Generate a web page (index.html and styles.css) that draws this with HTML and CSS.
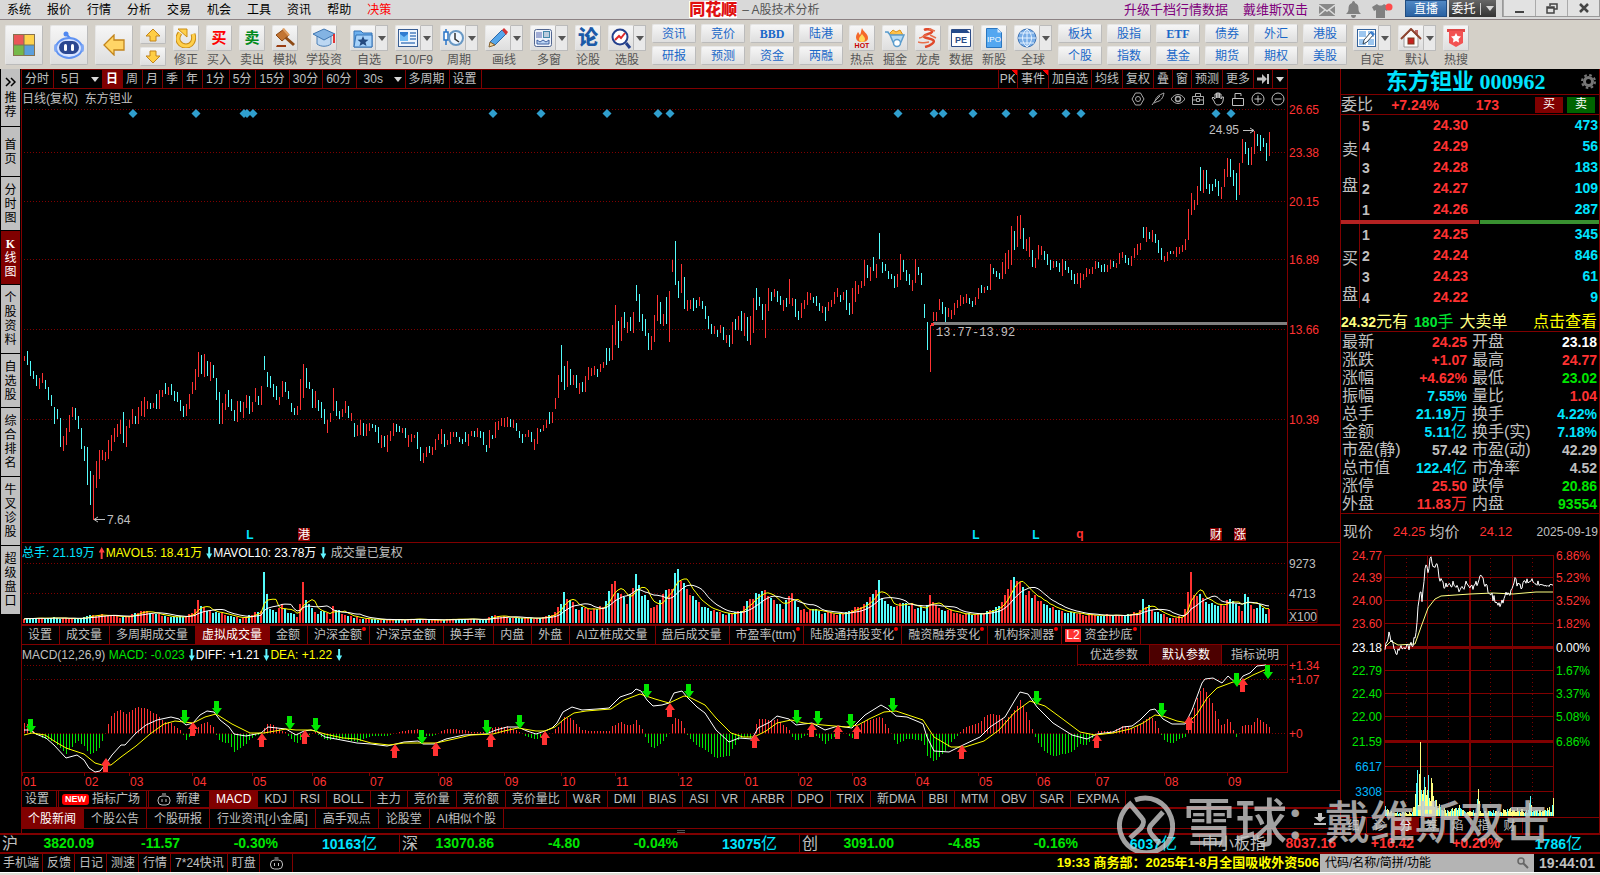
FILE: index.html
```html
<!DOCTYPE html>
<html lang="zh-CN">
<head>
<meta charset="utf-8">
<title>同花顺 - A股技术分析</title>
<link rel="stylesheet" href="styles.css">
</head>
<body>
<div class="app">
  <header class="titlebar">
    <nav class="menu">
      <button>系统</button><button>报价</button><button>行情</button><button>分析</button><button>交易</button><button>机会</button><button>工具</button><button>资讯</button><button>帮助</button><button class="hot">决策</button>
    </nav>
    <div class="brand"><b>同花顺</b><span>– A股技术分析</span></div>
    <div class="account">
      <a href="#">升级千档行情数据</a>
      <a href="#">戴维斯双击</a>
      <svg width="16" height="12" viewBox="0 0 16 12"><rect width="16" height="12" fill="#888"/><path d="M0 1l8 6 8-6M0 11l6-5M16 11l-6-5" fill="none" stroke="#ddd" stroke-width="1.5"/></svg>
      <svg width="15" height="17" viewBox="0 0 15 17"><path d="M7.500 0c1 0 1.500 1 1.500 2 3 1 3.500 3 3.500 6 0 2 .5 3 2.500 5H0c2-2 2.500-3 2.500-5 0-3 .5-5 3.500-6 0-1 .5-2 1.500-2zM5 14h5c0 2-1 3-2.500 3S5 16 5 14z" fill="#808080"/></svg>
      <svg width="21" height="16" viewBox="0 0 21 16"><path d="M5 2c2 2 5 2 7 0l5 3-2 4-2-1v8H4V8L2 9 0 5z" fill="#808080"/><circle cx="17" cy="5" r="3.500" fill="#ff4a4a"/></svg>
    </div>
    <button class="live">直播</button>
    <button class="trade"><span>委托</span><i class="caret light"></i></button>
    <div class="winctl">
      <button aria-label="最小化"><svg width="11" height="11"><path d="M1 9h9" stroke="#444" stroke-width="2"/></svg></button>
      <button aria-label="还原"><svg width="12" height="11"><path d="M4 3V1h7v5H8M1 4h7v6H1zM1 5h7" fill="none" stroke="#444" stroke-width="1.500"/></svg></button>
      <button aria-label="关闭"><svg width="10" height="10"><path d="M1 1l8 8M9 1L1 9" stroke="#444" stroke-width="2.500"/></svg></button>
    </div>
  </header>

  <div class="toolbar">
    <button class="big" aria-label="主页"><svg width="22" height="22"><rect width="11" height="11" fill="#ea5757"/><rect x="11" width="11" height="11" fill="#ffd34d"/><rect y="11" width="11" height="11" fill="#76b94a"/><rect x="11" y="11" width="11" height="11" fill="#5c9fdc"/><path d="M0 11h22M11 0v22" stroke="#775" /><rect x=".5" y=".5" width="21" height="21" fill="none" stroke="#87724f"/></svg></button>
    <button class="big" aria-label="助手"><svg width="30" height="28" viewBox="0 0 30 28"><circle cx="12" cy="3" r="2.500" fill="#5088f0"/><path d="M13 4l4 4" stroke="#5088f0" stroke-width="2"/><ellipse cx="15" cy="17" rx="13" ry="10" fill="#d8e4ff" stroke="#5f92f2" stroke-width="2"/><ellipse cx="1.500" cy="17" rx="1.500" ry="4" fill="#7fa8f5"/><ellipse cx="28.500" cy="17" rx="1.500" ry="4" fill="#7fa8f5"/><rect x="5" y="10" width="20" height="13" rx="6.500" fill="#2b4790"/><rect x="10" y="13" width="3" height="7" rx="1.500" fill="#fff"/><rect x="17" y="13" width="3" height="7" rx="1.500" fill="#fff"/></svg></button>
    <button class="big" aria-label="后退"><svg width="22" height="22"><path d="M1 11L11 1v5h10v10H11v5z" fill="#ffd566" stroke="#c2841c" stroke-width="1.300"/></svg></button>
    <div class="updown">
      <button aria-label="上一个"><svg width="16" height="14"><path d="M8 1l7 7h-4v5H5V8H1z" fill="#ffce45" stroke="#c2841c"/></svg></button>
      <button aria-label="下一个"><svg width="16" height="14"><path d="M8 13l7-7h-4V1H5v5H1z" fill="#ffce45" stroke="#c2841c"/></svg></button>
    </div>
    <button class="tool"><i><svg width="20" height="20" viewBox="0 0 20 20"><path d="M4 5c-5 7 0 13 6 13s9-6 7-12" fill="none" stroke="#c98d18" stroke-width="5"/><path d="M4 5c-5 7 0 13 6 13s9-6 7-12" fill="none" stroke="#ffd04b" stroke-width="3"/><path d="M2 1h9v8z" fill="#ffd04b" stroke="#c98d18"/></svg></i>修正</button>
    <button class="tool"><i class="buy">买</i>买入</button>
    <button class="tool"><i class="sell">卖</i>卖出</button>
    <button class="tool"><i><svg width="20" height="20" viewBox="0 0 20 20"><path d="M10 9l9 8" stroke="#8c4a16" stroke-width="3"/><path d="M1 7l8-6 5 6-7 6z" fill="#c27432" stroke="#8a4713"/><path d="M7 1l2-1 6 7-2 1z" fill="#e0a065"/><path d="M2 17h9v2H1z" fill="#9a3d12"/></svg></i>模拟</button>
    <button class="tool wide"><i><svg width="22" height="20" viewBox="0 0 22 20"><path d="M4 8v8c4 3 10 3 14 0V8z" fill="#bcd7f2" stroke="#4c80b6"/><path d="M0 6l11-5 11 5-11 6z" fill="#83b3e3" stroke="#3f76b0"/><path d="M21 6v9" stroke="#e23434" stroke-width="2"/></svg></i>学投资</button>
    <button class="tool split"><i><svg width="20" height="19" viewBox="0 0 20 19"><path d="M1 2h7l2 2h9v14H1z" fill="#6db0ee" stroke="#3573b5"/><path d="M3 6h16v12H1z" fill="#a6d2fa" stroke="#3573b5"/><path d="M10 7l1.500 3.500 4 .3-3 2.500 1 3.700-3.500-2-3.500 2 1-3.700-3-2.500 4-.3z" fill="#244a80"/></svg></i><em></em>自选</button>
    <button class="tool split"><i><svg width="20" height="18" viewBox="0 0 20 18"><rect x=".5" y=".5" width="19" height="17" fill="#eef5fd" stroke="#3a5f94"/><rect x="2" y="3" width="8" height="9" fill="#2f7cd0"/><path d="M2 5l4 3 4-3v7H2z" fill="#72bdf5"/><path d="M12 4h6M12 7h6M12 10h6M3 14h14" stroke="#4c80c0" stroke-width="1.500"/></svg></i><em></em>F10/F9</button>
    <button class="tool split"><i><svg width="21" height="20" viewBox="0 0 21 20"><path d="M3 1v16" stroke="#2874c8" stroke-width="1.500"/><rect x="1" y="4" width="4" height="8" fill="#fff" stroke="#2874c8" stroke-width="1.500"/><circle cx="13" cy="10" r="7" fill="#eef6ff" stroke="#6898c4" stroke-width="2"/><path d="M12 5v6l4 3" fill="none" stroke="#333" stroke-width="1.500"/></svg></i><em></em>周期</button>
    <button class="tool split"><i><svg width="20" height="20" viewBox="0 0 20 20"><path d="M2 14L14 2l4 4L7 17z" fill="#55a6ea" stroke="#2d68a8"/><path d="M14 2l2-2 4 4-2 3z" fill="#d33636"/><path d="M2 14l5 3-6 2z" fill="#f2d49a" stroke="#846230"/></svg></i><em></em>画线</button>
    <button class="tool split"><i><svg width="18" height="18" viewBox="0 0 18 18"><rect x=".5" y=".5" width="17" height="17" rx="2" fill="#eef2fa" stroke="#526690"/><path d="M2 4h6M2 6h6M2 8h6" stroke="#5366b0"/><rect x="9.500" y="2.500" width="6" height="6" fill="#bcd" stroke="#48a"/><path d="M3 15v-4l3 2 3-2 3 2 3-2v4z" fill="#bcd5f4" stroke="#4060a0"/></svg></i><em></em>多窗</button>
    <button class="tool"><i class="forum">论</i>论股</button>
    <button class="tool split"><i><svg width="21" height="21" viewBox="0 0 21 21"><circle cx="9" cy="9" r="7.500" fill="#fff" stroke="#24408c" stroke-width="2"/><path d="M15 15l4 5" stroke="#24408c" stroke-width="3"/><path d="M4 12l4-4 2 2 4-5" fill="none" stroke="#e02828" stroke-width="2"/></svg></i><em></em>选股</button>
    <div class="links four">
      <button>资讯</button><button>竞价</button><button class="lat">BBD</button><button>陆港</button>
      <button>研报</button><button>预测</button><button>资金</button><button>两融</button>
    </div>
    <button class="tool"><i><svg width="18" height="20" viewBox="0 0 18 20"><path d="M9 0c1 4 6 5 6 10 0 3-3 4-6 4s-6-1-6-5c0-2 1-3 2-5 1 1 1 2 2 3 1-2 1-4 2-7z" fill="#f4682a"/><path d="M9 6c1 2 3 3 3 5s-1 3-3 3-3-1-3-3 2-3 3-5z" fill="#ffd75a"/><text x="9" y="20" text-anchor="middle" font-size="7" font-weight="bold" fill="#c80000">HOT</text></svg></i>热点</button>
    <button class="tool"><i><svg width="20" height="20" viewBox="0 0 20 20"><path d="M4 6l4-4 3 2 4-2 3 5z" fill="#ffc34a" stroke="#d8901c"/><path d="M0 4h3l2 3h14l-3 7H8L5 7" fill="#b5daf5" stroke="#5c9dcd" stroke-width="1.500"/><circle cx="12" cy="15" r="3.500" fill="#fff" stroke="#5c9dcd" stroke-width="1.500"/></svg></i>掘金</button>
    <button class="tool"><i><svg width="20" height="20" viewBox="0 0 20 20"><path d="M6 2c4-2 9 0 8 2s-7 2-8 4 6 2 9 4-3 6-8 7" fill="none" stroke="#e0492c" stroke-width="2.500"/><path d="M1 10c4 0 4-3 8-3M0 14c4 2 8 0 11 0M12 7l6 3M11 1l6 2" fill="none" stroke="#e8704c" stroke-width="1.500"/></svg></i>龙虎</button>
    <button class="tool"><i><svg width="20" height="18" viewBox="0 0 20 18"><path d="M.5.500h19v17H.5z" fill="#fff" stroke="#2d4d88"/><path d="M1 1h15l3 3H1z" fill="#244a8a"/><text x="10" y="14" text-anchor="middle" font-size="9" font-weight="bold" fill="#2a4c86">PE</text></svg></i>数据</button>
    <button class="tool"><i><svg width="16" height="20" viewBox="0 0 16 20"><path d="M.5.500h11l4 4v15H.5z" fill="#54a7f0" stroke="#2a76c0"/><path d="M11.500.500v4h4z" fill="#d8ecff"/><text x="8" y="14" text-anchor="middle" font-size="8" fill="#fff">IPO</text></svg></i>新股</button>
    <button class="tool split"><i><svg width="20" height="20" viewBox="0 0 20 20"><circle cx="10" cy="10" r="9" fill="#77ace6" stroke="#3f74b4"/><path d="M1 10h18M3 5h14M3 15h14M10 1c-6 5-6 13 0 18M10 1c6 5 6 13 0 18M10 1v18" fill="none" stroke="#e4f1ff"/></svg></i><em></em>全球</button>
    <div class="links six">
      <button>板块</button><button>股指</button><button class="lat">ETF</button><button>债券</button><button>外汇</button><button>港股</button>
      <button>个股</button><button>指数</button><button>基金</button><button>期货</button><button>期权</button><button>美股</button>
    </div>
    <button class="tool split"><i><svg width="19" height="18" viewBox="0 0 19 18"><rect x=".5" y=".5" width="18" height="17" fill="#fff" stroke="#35649c"/><path d="M2 2h7v6H2zM11 2h6v6h-6zM2 10h7v6H2zM11 10h6v6h-6z" fill="#9cc6ef"/><path d="M6 15l1-4 7-8 3 2-7 8z" fill="#fff" stroke="#345"/><path d="M13 4l1-2 4 3-2 2z" fill="#3b7fd0"/></svg></i><em></em>自定</button>
    <button class="tool split"><i><svg width="22" height="20" viewBox="0 0 22 20"><path d="M15 2h3v6h-3z" fill="#b66"/><path d="M4 9v10h14V9l-7-7z" fill="#fafafa" stroke="#999"/><path d="M1 11L11 1l10 10" fill="none" stroke="#8e4430" stroke-width="2"/><rect x="8" y="10" width="6" height="6" fill="#c62020" stroke="#7c3a1c"/></svg></i><em></em>默认</button>
    <button class="tool"><i><svg width="18" height="18" viewBox="0 0 18 18"><path d="M0 0h18v3H0z" fill="#e04848"/><path d="M2 2h14v12l-7 4-7-4z" fill="#f25252"/><path d="M9 4l1.500 3 3.500.500-2.500 2.500.5 3.500L9 12l-3 1.500.5-3.500L4 7.500 7.500 7z" fill="#fff"/></svg></i>热搜</button>
  </div>

  <div class="workspace">
    <nav class="side">
      <button class="first"><svg width="11" height="10"><path d="M1 1l4 4-4 4M6 1l4 4-4 4" fill="none" stroke="#000" stroke-width="1.500"/></svg>推荐</button>
      <button class="n49">首页</button>
      <button class="n53">分时图</button>
      <button class="n53 on"><b>K</b>线图</button>
      <button class="n68">个股资料</button>
      <button class="n53">自选股</button>
      <button class="n68">综合排名</button>
      <button class="n68">牛叉诊股</button>
      <button class="n68">超级盘口</button>
    </nav>

    <main class="center">
      <div class="periods">
        <button>分时</button><button class="drop">5日<i class="caret light"></i></button><button class="on">日</button><button>周</button><button>月</button><button>季</button><button>年</button><button>1分</button><button>5分</button><button>15分</button><button>30分</button><button>60分</button><button class="drop">30s<i class="caret light"></i></button><button>多周期</button><button>设置</button>
        <span class="spring"></span>
        <div class="extras"><button class="flag pk">PK</button><button class="flag">事件</button><button>加自选</button><button>均线</button><button>复权</button><button>叠</button><button>窗</button><button>预测</button><button>更多</button><button aria-label="跳到最后"><svg width="12" height="10"><path d="M0 5h6" stroke="#c0c0c0" stroke-width="3"/><path d="M5 0l5 5-5 5z" fill="#c0c0c0"/><path d="M11 0v10" stroke="#c0c0c0" stroke-width="2"/></svg></button><button class="last" aria-label="展开"><i class="caret light"></i></button></div>
      </div>
      <div class="plothead">
        <span>日线(复权)&nbsp; 东方钽业</span>
        <div class="drawtools">
          <button aria-label="设置"><svg width="14" height="14"><path d="M4.500 1h5L13 7l-3.500 6h-5L1 7z" fill="none" stroke="#aaa"/><circle cx="7" cy="7" r="2.500" fill="none" stroke="#aaa"/></svg></button>
          <button aria-label="画笔"><svg width="14" height="14"><path d="M1 13l3-4c1-4 4-6 9-8-1 5-3 8-8 9l-2 1M4 9l5-5" fill="none" stroke="#aaa"/></svg></button>
          <button aria-label="显示"><svg width="14" height="14"><path d="M0 7c4-6 10-6 14 0-4 6-10 6-14 0z" fill="none" stroke="#aaa"/><circle cx="7" cy="7" r="2.500" fill="none" stroke="#aaa" stroke-width="1.500"/></svg></button>
          <button aria-label="工具箱"><svg width="14" height="14"><path d="M1.500 4.500h11v8h-11zM4.500 4V1.500h5V4M1 8h4M9 8h4M5.500 6.500h3v3h-3z" fill="none" stroke="#aaa"/></svg></button>
          <button aria-label="拖动"><svg width="14" height="14"><path d="M3 9L1 6l1-1 2 2V2h1.500v4V1H7v5V1h1.500v5V2H10v5l1-2h1.500L12 9c-1 3-2 4-5 4-2 0-3-1-4-4z" fill="none" stroke="#c0c0c0"/></svg></button>
          <button aria-label="锁定"><svg width="14" height="14"><path d="M1.500 6.500h11v7h-11zM4 6V1.500h6V4" fill="none" stroke="#c0c0c0"/></svg></button>
          <button aria-label="放大"><svg width="14" height="14"><circle cx="7" cy="7" r="6" fill="none" stroke="#c0c0c0"/><path d="M3.500 7h7M7 3.500v7" stroke="#c0c0c0"/></svg></button>
          <button aria-label="缩小"><svg width="14" height="14"><circle cx="7" cy="7" r="6" fill="none" stroke="#c0c0c0"/><path d="M3.500 7h7" stroke="#c0c0c0"/></svg></button>
        </div>
      </div>
      <svg id="kline" class="plot grow" viewBox="22 109 1318 433" preserveAspectRatio="none"></svg>
      <div class="rule"></div>
      <div class="plothead">
        <span class="cy">总手: 21.19万</span><span class="arr up"></span><span class="ye">MAVOL5: 18.41万</span><span class="arr dn"></span><span class="wh">MAVOL10: 23.78万</span><span class="arr dn"></span><span>&nbsp;成交量已复权</span>
      </div>
      <svg id="volume" class="plot vol" viewBox="22 563 1318 61" preserveAspectRatio="none"></svg>
      <div class="tabs">
        <button>设置</button><button>成交量</button><button>多周期成交量</button><button class="on">虚拟成交量</button><button>金额</button><button class="dot">沪深金额</button><button>沪深京金额</button><button>换手率</button><button>内盘</button><button>外盘</button><button>AI立桩成交量</button><button>盘后成交量</button><button class="dot">市盈率(ttm)</button><button class="dot">陆股通持股变化</button><button class="dot">融资融券变化</button><button class="dot">机构探测器</button><button class="dot l2"><u>L2</u>资金抄底</button>
      </div>
      <div class="plothead">
        <span>MACD(12,26,9)&nbsp;</span><span class="gr">MACD: -0.023</span><span class="arr dn"></span><span class="wh">DIFF: +1.21</span><span class="arr dn"></span><span class="ye">DEA: +1.22</span><span class="arr dn"></span>
        <div class="params"><button>优选参数</button><button class="on">默认参数</button><button>指标说明</button></div>
      </div>
      <svg id="macd" class="plot mac" viewBox="22 665 1318 125" preserveAspectRatio="none"></svg>
      <div class="tabs thin">
        <button>设置</button><button class="square"><mark>NEW</mark>指标广场</button><button class="create"><svg width="14" height="13" viewBox="0 0 14 13"><rect x="1" y="3" width="12" height="9" rx="4" fill="none" stroke="#c0c0c0"/><path d="M5 1h4M5 6v3M9 6v3" stroke="#c0c0c0"/></svg>新建</button><button class="on">MACD</button><button>KDJ</button><button>RSI</button><button>BOLL</button><button>主力</button><button>竞价量</button><button>竞价额</button><button>竞价量比</button><button>W&amp;R</button><button>DMI</button><button>BIAS</button><button>ASI</button><button>VR</button><button>ARBR</button><button>DPO</button><button>TRIX</button><button>新DMA</button><button>BBI</button><button>MTM</button><button>OBV</button><button>SAR</button><button>EXPMA</button>
      </div>
      <div class="tabs news">
        <button class="on">个股新闻</button><button>个股公告</button><button>个股研报</button><button>行业资讯[小金属]</button><button>高手观点</button><button>论股堂</button><button>AI相似个股</button>
        <span class="spring"></span>
        <svg class="collapse" width="12" height="12"><path d="M4 0h4v4h4L6 9 0 4h4zM0 10h12v2H0z" fill="#c0c0c0"/></svg>
      </div>
      <div class="grip"><i></i></div>
    </main>

    <aside class="quote">
      <h1><span>东方钽业 000962</span><svg width="15" height="15" viewBox="0 0 15 15"><circle cx="7.500" cy="7.500" r="4" fill="none" stroke="#777" stroke-width="3"/><circle cx="7.500" cy="7.500" r="6.500" fill="none" stroke="#777" stroke-width="2" stroke-dasharray="2.600 2.500"/></svg></h1>
      <div class="ratio"><span class="cn">委比</span><b>+7.24%</b><b>173</b><button class="b">买</button><button class="s">卖</button></div>
      <div class="book">
        <div class="levels"><div class="cap"><span>卖</span><span>盘</span></div>
          <table><tr><th>5</th><td>24.30</td><td>473</td></tr><tr><th>4</th><td>24.29</td><td>56</td></tr><tr><th>3</th><td>24.28</td><td>183</td></tr><tr><th>2</th><td>24.27</td><td>109</td></tr><tr><th>1</th><td>24.26</td><td>287</td></tr></table></div>
        <div class="power"><i></i><i></i></div>
        <div class="levels"><div class="cap"><span>买</span><span>盘</span></div>
          <table><tr><th>1</th><td>24.25</td><td>345</td></tr><tr><th>2</th><td>24.24</td><td>846</td></tr><tr><th>3</th><td>24.23</td><td>61</td></tr><tr><th>4</th><td>24.22</td><td>9</td></tr></table></div>
      </div>
      <div class="alert"><span><b>24.32</b>元有</span><span class="lots"><b>180</b>手</span><span>大卖单</span><a href="#">点击查看</a></div>
      <dl class="stats">
        <div><dt>最新</dt><dd class="re">24.25</dd></div><div><dt>开盘</dt><dd class="wh">23.18</dd></div>
        <div><dt>涨跌</dt><dd class="re">+1.07</dd></div><div><dt>最高</dt><dd class="re">24.77</dd></div>
        <div><dt>涨幅</dt><dd class="re">+4.62%</dd></div><div><dt>最低</dt><dd class="gr">23.02</dd></div>
        <div><dt>振幅</dt><dd class="cy">7.55%</dd></div><div><dt>量比</dt><dd class="re">1.04</dd></div>
        <div><dt>总手</dt><dd class="cy">21.19<s>万</s></dd></div><div><dt>换手</dt><dd class="cy">4.22%</dd></div>
        <div><dt>金额</dt><dd class="cy">5.11<s>亿</s></dd></div><div><dt>换手(实)</dt><dd class="cy">7.18%</dd></div>
        <div><dt>市盈(静)</dt><dd>57.42</dd></div><div><dt>市盈(动)</dt><dd>42.29</dd></div>
        <div><dt>总市值</dt><dd class="cy">122.4<s>亿</s></dd></div><div><dt>市净率</dt><dd>4.52</dd></div>
        <div><dt>涨停</dt><dd class="re">25.50</dd></div><div><dt>跌停</dt><dd class="gr">20.86</dd></div>
        <div><dt>外盘</dt><dd class="re">11.83<s>万</s></dd></div><div><dt>内盘</dt><dd class="gr">93554</dd></div>
      </dl>
      <div class="now"><span class="lab">现价</span><span class="re">24.25</span><span class="lab">均价</span><span class="re">24.12</span><time>2025-09-19</time></div>
      <svg id="intraday" class="plot grow" viewBox="1341 554 258 263" preserveAspectRatio="none"></svg>
      <div class="mini"><button>细</button><button>诊</button><button class="on">分</button><button>筹</button><button>焰</button><button>指</button><button>财</button></div>
    </aside>
  </div>

  <div class="indices">
    <div><span>沪</span><b>3820.09</b><b>-11.57</b><b>-0.30%</b><b class="cy">10163<s>亿</s></b></div>
    <div><span>深</span><b>13070.86</b><b>-4.80</b><b>-0.04%</b><b class="cy">13075<s>亿</s></b></div>
    <div><span>创</span><b>3091.00</b><b>-4.85</b><b>-0.16%</b><b class="cy">6037<s>亿</s></b></div>
    <div class="sme"><span>中小板指</span><b>8037.16</b><b>+16.42</b><b>+0.20%</b><b class="cy">1786<s>亿</s></b></div>
  </div>
  <footer class="status">
    <button>手机端</button><button>反馈</button><button>日记</button><button>测速</button><button>行情</button><button>7*24快讯</button><button>盯盘</button><button class="bot" aria-label="助手"><svg width="15" height="13" viewBox="0 0 14 13"><rect x="1" y="3" width="12" height="9" rx="4" fill="none" stroke="#c0c0c0"/><path d="M5 1h4M5 6v3M9 6v3" stroke="#c0c0c0"/></svg></button>
    <span class="spring"></span>
    <a href="#" class="ticker">19:33 商务部：2025年1-8月全国吸收外资506</a>
    <label class="find"><input type="text" placeholder="代码/名称/简拼/功能" aria-label="代码/名称/简拼/功能"><svg width="12" height="12"><circle cx="4" cy="4" r="3" fill="none" stroke="#666" stroke-width="1.500"/><path d="M6 6l5 5" stroke="#666" stroke-width="2"/></svg></label>
    <time>19:44:01</time>
  </footer>
  <div class="strip"></div>
  <div class="watermark"><svg width="58" height="58" viewBox="0 0 58 58"><g fill="none" stroke="#c8c8c8" stroke-width="5"><path d="M18 5c15-6 31 2 36 17s-2 29-15 34-28-1-34-14S4 17 13 9l11 13c4 4 3 7 0 11L13 43"/><path d="M46 17L35 29c-4 4-3 8 0 11l8 9"/></g></svg><span>雪球</span><span class="colon">：</span><span>戴维斯双击</span></div>
</div>
<script src="charts.js"></script>
</body>
</html>
```

FILE: styles.css
```css
* { box-sizing: border-box; }
body { margin: 0; background: #000; color: #c0c0c0; font: 12px/16px "Liberation Sans", "Noto Sans CJK SC", sans-serif; }
button { font: inherit; color: inherit; background: none; border: 0; margin: 0; padding: 0; white-space: nowrap; cursor: pointer; }
a { color: inherit; text-decoration: none; }
svg { display: block; flex: none; }
i, em { font-style: normal; }
s { text-decoration: none; font-weight: 400; font-size: 16px; }
.app { position: relative; display: flex; flex-direction: column; min-height: 100vh; overflow: hidden; }
.spring { flex: 1; }
.caret { display: inline-block; border: 4px solid transparent; border-top: 5px solid #444; border-bottom: 0; }
.caret.light { border-top-color: #d8d8d8; }
.cy { color: #00e4ff; } .ye { color: #ff0; } .wh { color: #fff; } .gr { color: #00e600; } .re { color: #ff3232; }

.titlebar { display: flex; align-items: center; height: 20px; background: #d9d9d9; border-bottom: 1px solid #8c8284; color: #000; }
.menu { display: flex; gap: 16px; padding-left: 7px; flex: 69 1 0; }
.menu .hot { color: #f00; }
.brand { display: flex; align-items: center; gap: 5px; color: #555; }
.brand b { color: #e01010; font-size: 16px; line-height: 17px; font-weight: 900; background: #fff; }
.account { flex: 58 1 0; display: flex; align-items: center; justify-content: flex-end; gap: 11px; padding-right: 12px; color: #80007c; }
.account a { font-size: 13px; }
.account a:first-child { margin-right: 4px; }
.live, .trade { align-self: flex-start; height: 17px; color: #fff; }
.live { width: 42px; background: linear-gradient(#5088c4, #2a62a2); border: 1px solid #204c80; margin-right: 2px; }
.trade { width: 47px; background: linear-gradient(#666, #333); display: flex; align-items: center; justify-content: center; gap: 5px; }
.trade span { padding-right: 4px; border-right: 1px solid #ccc; line-height: 12px; }
.winctl { display: flex; align-self: flex-start; margin-left: 6px; height: 17px; border: 1px solid #999; border-top: 0; }
.winctl button { width: 32px; display: grid; place-items: center; border-left: 1px solid #aaa; background: #e2e2e2; }

.toolbar { display: flex; align-items: flex-start; gap: 7px; height: 49px; padding: 5px 5px 0; background: #d4d0c8; color: #555; }
.toolbar button i, .big, .updown button, .links button { background: linear-gradient(#f6f6f6, #dedede); border: 1px solid #c4c2be; border-color: #e6e6e6 #bbb #bbb #e6e6e6; border-radius: 2px; }
.big { width: 38px; height: 40px; display: grid; place-items: center; }
.updown { display: flex; flex-direction: column; gap: 3px; }
.updown button { width: 26px; height: 19px; display: grid; place-items: center; }
.tool { width: 26px; display: flex; flex-wrap: wrap; justify-content: center; line-height: 18px; }
.tool i { width: 26px; height: 26px; display: grid; place-items: center; }
.tool.wide, .tool.split { width: 38px; }
.tool.split em { width: 12px; height: 26px; background: #e9e9e9; border: 1px solid #bbb; border-left: 0; display: grid; place-items: center; }
.tool.split em::after { content: ""; border: 4px solid transparent; border-top: 5px solid #555; border-bottom: 0; }
.tool .buy { color: #f00; font-weight: 700; font-size: 15px; }
.tool .sell { color: #008a1c; font-weight: 700; font-size: 15px; }
.tool .forum { color: #1b5aa8; font-weight: 900; font-size: 20px; }
.links { display: grid; gap: 3px 5px; margin: -1px -1px 0; color: #1a68c8; }
.links button { width: 44px; height: 19px; line-height: 16px; }
.links .lat { font-family: "Liberation Serif", serif; font-weight: 700; }
.links.four { grid-template-columns: repeat(4, 44px); }
.links.six { grid-template-columns: repeat(6, 44px); }

.workspace { flex: 1; display: flex; min-height: 764px; }
.side { width: 21px; flex: none; padding: 0 1px; display: flex; flex-direction: column; gap: 1px; color: #000; }
.side button { width: 19px; padding: 0 3px; background: #c0c0c0; white-space: normal; line-height: 14px; word-break: break-all; display: flex; flex-direction: column; align-items: center; justify-content: center; }
.side .first { height: 57px; gap: 4px; }
.side .n49 { height: 49px; } .side .n53 { height: 53px; } .side .n68 { height: 68px; }
.side .on { background: #800000; color: #fff; }
.side b { font-family: "Liberation Serif", serif; }

.center { flex: 1; min-width: 0; display: flex; flex-direction: column; border-left: 1px solid #800000; }
.periods { display: flex; height: 20px; margin-right: 52px; border: solid #800000; border-width: 1px 1px 1px 0; }
.extras { display: flex; border-left: 1px solid #800000; }
.periods button { padding: 0 4px 0 3px; border-right: 1px solid #800000; line-height: 17px; display: flex; align-items: center; }
.periods .extras button { padding: 0 3px; }
.periods .extras .pk { padding: 0 1px; }
.periods .on { background: #800000; color: #fff; font-weight: 700; }
.periods .drop { width: 49px; padding: 0 3px 0 7px; justify-content: space-between; }
.periods .flag { background: linear-gradient(225deg, #f00 4px, transparent 4px); }
.periods .last { border-right: 0; }
.plothead { display: flex; align-items: center; height: 20px; margin-right: 52px; border-right: 1px solid #800000; white-space: nowrap; }
.drawtools { margin-left: auto; display: flex; gap: 6px; padding-right: 2px; }
.plot { width: 100%; height: 0; overflow: visible; }
.grow { flex: 1 0 0; min-height: 200px; }
.vol { height: 61px; } .mac { height: 125px; }
.rule { height: 1px; background: #800000; }
.arr { width: 6px; height: 12px; margin: 0 1px 0 4px; background: #60f4ff; clip-path: polygon(33% 0, 66% 0, 66% 55%, 100% 55%, 50% 100%, 0 55%, 33% 55%); }
.arr.up { background: #ff4040; clip-path: polygon(33% 100%, 66% 100%, 66% 45%, 100% 45%, 50% 0, 0 45%, 33% 45%); }
.tabs { display: flex; height: 21px; border-top: 2px solid #800000; border-bottom: 1px solid #800000; }
.tabs button { padding: 0 7px 0 6px; border-right: 1px solid #800000; line-height: 17px; position: relative; }
.tabs .on { background: #800000; color: #fff; }
.tabs .dot::after { content: ""; position: absolute; right: 3px; top: 1px; width: 4px; height: 4px; border-radius: 2px; background: #f00; }
.tabs .l2 { padding-left: 3px; }
.tabs u { display: inline-block; text-decoration: none; background: #ff3232; color: #fff; line-height: 13px; padding: 0 1px; margin-right: 4px; }
.tabs.thin { height: 19px; border-top-width: 1px; border-bottom-width: 2px; }
.tabs.thin button { line-height: 16px; padding: 0 6px; }
.tabs.thin button:first-child { padding: 0 7px 0 3px; }
.tabs.thin .square { border-left: 1px solid #800000; margin-left: 1px; padding: 0 6px 0 3px; }
.tabs mark { display: inline-block; background: #f00; color: #fff; border-radius: 3px; font-size: 9px; line-height: 11px; font-weight: 700; padding: 0 3px; margin-right: 3px; vertical-align: 1px; }
.tabs.thin .create { display: flex; align-items: center; gap: 5px; padding: 0 9px 0 8px; border-left: 1px solid #800000; margin-left: 1px; }
.tabs.news { height: 20px; border-top: 0; }
.tabs.news button { line-height: 18px; padding: 0 7px; }
.tabs.news button:first-child { padding: 0 7px 0 6px; }
.collapse { margin: 4px 14px 0 0; }
.grip { height: 4px; }
.grip i { display: block; width: 8px; height: 3px; margin: 1px auto 0; border: solid #555; border-width: 1px 0; }
.params { margin-left: auto; display: flex; align-self: stretch; border-left: 1px solid #800000; border-bottom: 1px solid #800000; }
.params button { padding: 0 7px 0 8px; border-right: 1px solid #800000; width: 72px; line-height: 18px; }
.params .on { background: #4c0000; color: #fff; }
.params button:last-child { border: 0; width: 65px; }

.quote { width: 260px; flex: none; display: flex; flex-direction: column; border-left: 1px solid #800000; border-right: 1px solid #800000; }
.quote h1 { display: flex; align-items: center; margin: 0; height: 25px; color: #00e4ff; font: 700 22px/24px "Liberation Serif", "Noto Sans CJK SC", serif; padding: 0 3px 0 45px; justify-content: space-between; }
.ratio { display: grid; grid-template-columns: 38px 56px 56px 1fr 28px 28px; gap: 4px; align-items: center; height: 20px; border-top: 1px solid #800000; padding-right: 4px; color: #ff3232; font-size: 14px; }
.ratio b { text-align: right; }
.ratio .cn { font-size: 16px; color: #c0c0c0; }
.ratio button { height: 16px; color: #fff; line-height: 15px; font-size: 12px; }
.ratio .b { background: #800000; grid-column: 5; } .ratio .s { background: #006400; }
.book { height: 199px; border-top: 1px solid #800000; font-size: 14px; font-weight: 700; }
.levels { display: flex; }
.cap { width: 19px; padding: 27px 0 0 1px; display: flex; flex-direction: column; gap: 20px; border-right: 1px solid #800000; font-size: 16px; font-weight: 400; }
.levels table { flex: 1; border-collapse: collapse; }
.levels tr { height: 21px; }
.levels th { width: 10px; padding: 0 0 0 2px; text-align: left; }
.levels td { padding: 0 1px 0 0; text-align: right; width: 99px; color: #ff3232; line-height: 21px; }
.levels td:last-child { color: #00e4ff; width: auto; }
.power { display: flex; gap: 1px; height: 4px; }
.power i { flex: 138; background: #b42222; } .power i + i { flex: 119; background: #389030; }
.alert { display: flex; gap: 6px; height: 18px; align-items: center; color: #ffff80; font-size: 16px; white-space: nowrap; }
.alert b { font-size: 14px; } .alert .lots { color: #00e632; } .alert a { margin-left: auto; color: #ff0; padding-right: 2px; }
.stats { margin: 0; height: 182px; border-top: 1px solid #800000; padding: 1px 2px 0 1px; display: grid; grid-template-columns: 125px 1fr; column-gap: 5px; grid-auto-rows: 18px; }
.stats div { display: flex; justify-content: space-between; align-items: center; line-height: 18px; white-space: nowrap; }
.stats dt { font-size: 16px; } .stats dd { margin: 0; font-weight: 700; font-size: 14px; }
.now { display: flex; align-items: center; height: 41px; padding: 0 1px 4px 2px; border-top: 1px solid #800000; white-space: nowrap; }
.now .lab { font-size: 15px; } .now .re { margin: 0 4px 0 20px; font-size: 13px; } .now time { margin-left: auto; }
.mini { display: flex; height: 16px; border-top: 1px solid #800000; }
.mini button { width: 26px; border-right: 1px solid #800000; line-height: 14px; }
.mini .on { background: #800000; color: #fff; }

.indices { display: grid; grid-template-columns: repeat(4, 1fr); height: 21px; border: solid #800000; border-width: 2px 0; font-size: 14px; line-height: 17px; color: #00e600; }
.indices div { display: grid; grid-template-columns: 20px 72px 86px 98px 99px 1fr; border-right: 1px solid #800000; padding-left: 2px; text-align: right; }
.indices span { color: #c0c0c0; font-size: 16px; text-align: left; white-space: nowrap; }
.indices .sme { grid-template-columns: 64px 70px 78px 86px 82px; color: #ff3232; border: 0; }
.status { display: flex; height: 18px; }
.status button { padding: 0 3px 0 4px; border-right: 1px solid #800000; line-height: 17px; }
.status button:first-child { padding-left: 3px; }
.status .bot { width: 33px; padding-left: 9px; }
.ticker { color: #ff0; font-size: 13px; font-weight: 700; line-height: 17px; white-space: nowrap; }
.find { display: flex; align-items: center; width: 214px; background: #b4b4b4; padding: 0 5px; margin-left: 1px; }
.find input { flex: 1; min-width: 0; font: inherit; border: 0; padding: 0; background: none; outline: 0; }
.find input::placeholder { color: #000; opacity: 1; }
.status time { width: 66px; text-align: center; font-weight: 700; font-size: 14px; line-height: 18px; }
.strip { height: 3px; background: #e0dcd4; border-top: 1px solid #fff; }

.watermark { position: absolute; right: 50px; bottom: 22px; display: flex; align-items: center; gap: 6px; color: #c8c8c8; opacity: .8; font-size: 45px; line-height: 58px; font-weight: 500; pointer-events: none; }
.watermark svg + span { font-size: 52px; margin-left: 2px; }
.watermark .colon { margin: 0 -10px 0 -9px; }
```

FILE: charts.js
```javascript
const RED = '#ff3232', CYAN = '#54fcfc', GREEN = '#00e600', LINE = '#800000';
const rect = (x, y, w, h, f) => `<rect x="${x}" y="${y}" width="${w}" height="${h}" fill="${f}"/>`;
const text = (x, y, s, f, extra = '') => `<text x="${x}" y="${y}" fill="${f}" font-size="12" ${extra}>${s}</text>`;
const dots = (x1, x2, y) => `<path d="M${x1} ${y + 0.5}H${x2}" stroke="${LINE}" stroke-dasharray="1 2"/>`;
const poly = (pts, c, w = 1) => `<polyline points="${pts.map(p => p.join()).join(' ')}" fill="none" stroke="${c}" stroke-width="${w}"/>`;
const put = (id, s) => { document.getElementById(id).innerHTML = s; };
const noise = i => { const v = Math.sin(i * 12.9898) * 43758.5453; return v - Math.floor(v); };
const at = (pts, x) => {
  for (let k = 1; k < pts.length; k++) {
    if (x <= pts[k][0]) {
      const [a, b] = pts[k - 1], [c, d] = pts[k];
      return b + (d - b) * (x - a) / (c - a);
    }
  }
  return pts[pts.length - 1][1];
};

/* One entry per trading day: direction, high and low position on the price scale. */
const bars = `r356-361 c351-365 c361-376 c371-379 c375-386 r378-389 r373-383 c380-389 c387-400 c395-406 c407-424 c409-419 c418-447 r436-451 r428-445 r415-432 r407-417 c408-420 c416-429 c428-449
c446-461 c447-485 c471-505 r475-520 r461-488 r450-479 r450-460 r452-461 r440-459 r435-451 r428-442 r424-437 r420-434 c412-443 r426-447 r420-428 r409-424 c416-424 r407-424 r401-416
r397-417 r401-409 c403-409 r403-408 c394-409 r390-409 r390-397 c383-394 r387-395 c384-395 c391-401 c392-402 c400-411 c406-417 r404-416 r394-409 r382-394 r369-390 r352-377 c355-374
r354-377 c361-376 r362-381 c365-378 c378-400 c392-424 r403-424 r394-410 c390-407 c399-411 c410-421 r401-422 c401-412 r402-418 r395-408 c396-414 r402-412 r388-402 c396-405 r386-405
c356-370 c372-387 c376-388 c384-397 c386-400 r397-405 r381-397 c382-392 c391-399 c403-412 c408-415 r406-415 r379-410 r364-398 c368-388 c382-389 c389-408 r391-408 c400-411 c402-418
c409-424 r420-433 r413-422 r388-411 c401-416 c411-419 r409-417 r401-413 c406-418 r413-421 c423-437 r425-436 r420-435 c423-436 r424-436 r423-431 c424-428 c425-432 c427-443 r435-448
c436-447 r435-452 r431-441 r423-436 c424-432 c426-432 r428-433 c428-438 r435-447 r434-442 r435-438 c432-449 c447-461 r453-463 r447-457 c446-453 r447-455 r439-450 r434-440 r429-444
c434-447 r440-445 r432-444 r432-437 c432-437 c437-442 c439-444 c432-442 r434-446 r431-436 c431-437 r428-437 c431-438 c432-445 c445-452 r430-448 c435-439 r422-438 r421-430 r418-426
r418-427 r417-427 c419-427 r420-428 c423-431 c431-438 c434-443 r434-437 r430-437 c432-442 r439-450 r428-444 c429-432 r425-431 r420-428 c412-424 r412-423 r398-409 r375-398 c345-382
c366-390 r361-387 c369-385 r375-385 c375-388 r383-394 c382-392 r376-392 r367-380 r368-376 r366-375 c369-377 r364-372 r362-368 c348-365 c348-361 r325-360 r305-345 c321-348 r317-341
c312-328 r322-333 c317-331 r312-333 c285-301 c294-322 c314-331 c319-336 c333-350 r336-350 r315-342 r295-321 c302-324 r314-326 c297-324 r291-342 r260-272 c241-285 c281-298 r264-293
c277-309 r300-311 r300-309 c298-311 c300-308 r297-306 c301-309 c306-319 c316-329 c324-334 r326-334 c330-337 r325-333 c327-340 r335-343 c335-347 r322-344 c319-330 r316-330 c311-331
r313-336 c317-341 r316-345 r298-333 c288-310 c297-306 c304-320 r304-338 r288-311 c292-301 r289-297 c291-302 c296-305 r300-311 c298-307 r279-304 r298-306 c299-317 c311-320 r303-318
r300-309 r292-305 r293-300 c297-303 c296-306 c303-311 r306-313 c307-321 r302-311 r300-307 r292-304 r288-297 c295-302 r292-300 c290-310 c303-315 r288-314 r281-302 r285-294 r281-288
r260-286 c265-278 r267-281 c257-271 r264-278 c233-259 c262-273 c264-271 c271-279 c274-279 c276-288 r274-287 r254-280 c260-272 c270-281 c274-285 r280-291 r259-283 c267-275 c273-285
c304-318 c322-350 r325-372 r312-321 r312-321 r299-310 c302-314 c307-322 r308-317 r310-319 r303-315 r300-308 r295-306 r297-304 r294-303 c298-304 c301-307 r297-305 r288-299 c285-293
r287-293 c286-290 r264-290 c268-274 c271-277 c273-279 r262-279 r253-274 r250-269 r226-265 c231-250 r216-247 r215-239 c228-249 r239-251 r237-257 c250-267 r258-268 r245-259 r246-255
c251-260 c254-265 c260-270 r261-268 c261-267 c263-272 r259-276 c261-270 c267-273 c270-280 c274-284 r273-284 r273-288 r274-280 r268-277 r269-274 r267-274 r261-269 c262-268 c265-272
c264-272 r265-272 r260-269 c261-267 r263-268 r253-264 r252-258 c255-263 c258-265 r256-266 r248-258 r244-255 r243-250 c227-238 r227-242 c232-239 r230-242 c234-243 c240-253 c248-260
r256-262 r252-261 c251-254 r251-254 r247-257 r247-254 r245-252 r239-250 r209-240 r193-215 r200-210 r186-205 c167-191 r170-193 c170-189 c184-194 c184-191 c179-187 c181-196 r187-199
r169-187 r158-177 c159-177 c170-186 c173-200 r163-195 r139-163 c142-154 c148-165 r147-165 r131-154 c134-146 c135-151 c138-147 c143-161 r132-156`
  .split(/\s+/).map((s, i) => {
    const [top, bottom] = s.slice(1).split('-').map(Number);
    return { x: 24 + 3 * i, top, bottom, color: s[0] === 'r' ? RED : CYAN };
  });

/* Price chart */
let k = '';
[[109, '26.65'], [152, '23.38'], [201, '20.15'], [259, '16.89'], [329, '13.66'], [419, '10.39']].forEach(([y, s]) => {
  k += dots(24, 1286, y) + text(1289, y + 5, s, RED);
});
k += rect(1287, 109, 1, 433, LINE);
bars.forEach(b => { k += rect(b.x, b.top, 1, b.bottom - b.top, b.color); });
[133, 196, 244, 247, 253, 493, 541, 607, 658, 670, 898, 934, 943, 973, 1006, 1033, 1066, 1081, 1216, 1231].forEach(x => {
  k += `<path d="M${x} 109l4.500 4.500-4.500 4.500-4.500-4.500z" fill="#2f9fce"/>`;
});
k += rect(933, 322, 354, 3, '#808080') + rect(931, 323, 3, 3, RED);
k += text(936, 336, '13.77-13.92', '#c0c0c0', 'font-family="Liberation Mono"');
k += text(107, 524, '7.64', '#c0c0c0') + '<path d="M94 519.500h11M98 517l-4 2.500 4 2.500" fill="none" stroke="#c0c0c0"/>';
k += text(1209, 134, '24.95', '#c0c0c0') + '<path d="M1243 130.500h11M1250 128l4 2.500-4 2.500" fill="none" stroke="#c0c0c0"/>';
[250, 976, 1036].forEach(x => { k += text(x, 539, 'L', '#00e4ff', 'font-weight="bold" text-anchor="middle"'); });
k += text(1080, 538, 'q', RED, 'font-weight="bold" text-anchor="middle"');
[[304, '港'], [1216, '财'], [1240, '涨']].forEach(([x, s]) => {
  k += rect(x - 6, 528, 12, 13, '#8c0000') + text(x, 539, s, '#fff', 'text-anchor="middle"');
});
put('kline', k);

/* Volume */
const volKeys = [[0, 5], [10, 5], [18, 4], [22, 8], [26, 9], [32, 6], [36, 8], [40, 12], [44, 9], [48, 7], [54, 6], [56, 10], [57, 16], [58, 25], [59, 20], [60, 18], [62, 11], [64, 13], [68, 8], [72, 5], [76, 9], [79, 14], [80, 49], [81, 31], [82, 16], [84, 13], [86, 20], [88, 10], [91, 7], [92, 19], [93, 39], [94, 22], [96, 14], [98, 11], [100, 13], [102, 5], [103, 20], [104, 13], [106, 10], [108, 7], [112, 5], [118, 3], [130, 4], [135, 3], [150, 4], [153, 3], [157, 8], [160, 6], [165, 5], [172, 5], [176, 9], [178, 14], [180, 28], [182, 22], [185, 15], [190, 14], [194, 20], [196, 43], [197, 40], [199, 30], [201, 22], [204, 45], [206, 30], [209, 16], [212, 22], [215, 38], [216, 30], [217, 59], [218, 50], [220, 40], [223, 26], [228, 14], [234, 9], [239, 13], [242, 25], [244, 32], [247, 30], [250, 22], [253, 17], [256, 28], [259, 14], [265, 12], [271, 9], [275, 12], [280, 20], [285, 40], [286, 26], [290, 16], [294, 20], [300, 14], [302, 26], [305, 15], [312, 9], [320, 9], [326, 20], [329, 40], [331, 45], [333, 33], [336, 27], [340, 18], [346, 12], [354, 8], [362, 8], [368, 8], [372, 12], [373, 24], [374, 18], [378, 10], [383, 5], [386, 7], [387, 13], [388, 30], [389, 48], [390, 29], [392, 33], [394, 24], [398, 16], [402, 24], [406, 15], [407, 28], [410, 15], [412, 18], [414, 10], [415, 14]];
const vols = bars.map((b, i) => Math.max(2, Math.round(at(volKeys, i) * (0.82 + 0.3 * noise(i)))));
const average = n => vols.map((_, i) => {
  const part = vols.slice(Math.max(0, i - n + 1), i + 1);
  return [24 + 3 * i, 623 - part.reduce((a, b) => a + b, 0) / part.length];
});
let v = dots(24, 1286, 563) + dots(24, 1286, 593) + rect(1287, 563, 1, 61, LINE);
vols.forEach((h, i) => { v += rect(bars[i].x - 1, 623 - h, 2, h, bars[i].color); });
v += poly(average(5), '#ff0') + poly(average(10), '#fff');
v += text(1289, 568, '9273', '#c0c0c0') + text(1289, 598, '4713', '#c0c0c0');
v += `<path d="M1288 609.500h29v13h-29" fill="none" stroke="${LINE}"/>` + text(1289, 621, 'X100', '#c0c0c0');
put('volume', v);

/* MACD */
const diff = [[24, 730], [30, 730], [36, 734], [46, 738], [54, 745], [66, 758], [77, 755], [84, 760], [89, 768], [95, 772], [100, 771], [105, 765], [112, 755], [121, 745], [125, 745], [136, 733], [146, 725], [157, 720], [171, 717], [179, 719], [186, 725], [193, 723], [200, 715], [207, 711], [214, 712], [220, 720], [229, 727], [234, 734], [246, 736], [261, 733], [268, 727], [286, 729], [296, 735], [304, 731], [311, 730], [316, 731], [325, 737], [336, 739], [357, 743], [371, 744], [387, 746], [396, 744], [404, 742], [418, 741], [423, 744], [434, 744], [446, 739], [464, 735], [486, 734], [496, 730], [507, 727], [518, 727], [527, 731], [536, 734], [545, 731], [552, 728], [557, 723], [563, 712], [572, 707], [582, 710], [597, 709], [609, 708], [620, 697], [632, 693], [636, 689], [641, 691], [647, 700], [653, 706], [662, 705], [669, 703], [674, 693], [682, 691], [687, 697], [697, 707], [705, 713], [716, 730], [729, 742], [739, 738], [752, 739], [758, 728], [770, 722], [777, 716], [789, 719], [796, 725], [812, 723], [825, 730], [838, 726], [852, 728], [865, 715], [881, 705], [888, 709], [896, 716], [907, 717], [919, 722], [923, 724], [927, 737], [934, 751], [949, 752], [961, 746], [980, 737], [990, 727], [1005, 717], [1015, 700], [1020, 692], [1028, 694], [1037, 707], [1053, 723], [1072, 735], [1087, 739], [1097, 734], [1113, 732], [1123, 727], [1132, 726], [1140, 720], [1150, 710], [1155, 709], [1163, 719], [1172, 724], [1185, 724], [1192, 710], [1202, 683], [1205, 679], [1213, 678], [1222, 683], [1228, 676], [1237, 684], [1243, 676], [1250, 673], [1257, 666], [1266, 665]];
const dea = [[24, 735], [32, 733], [45, 735], [54, 741], [66, 748], [84, 754], [95, 763], [102, 765], [111, 765], [121, 757], [136, 746], [150, 734], [164, 724], [175, 721], [193, 723], [205, 717], [216, 714], [232, 724], [250, 733], [264, 733], [286, 729], [296, 730], [311, 730], [325, 734], [343, 738], [357, 739], [371, 743], [389, 745], [404, 743], [425, 743], [436, 743], [454, 739], [471, 735], [493, 734], [504, 731], [518, 728], [536, 731], [545, 731], [555, 727], [563, 720], [574, 713], [586, 711], [611, 709], [624, 700], [640, 694], [655, 699], [669, 703], [684, 696], [689, 697], [705, 705], [716, 718], [731, 733], [743, 737], [754, 737], [766, 731], [777, 723], [791, 720], [804, 723], [823, 725], [846, 727], [858, 725], [869, 719], [884, 712], [896, 711], [923, 720], [934, 737], [951, 747], [965, 747], [984, 741], [999, 730], [1015, 712], [1030, 701], [1045, 706], [1064, 720], [1080, 732], [1095, 735], [1113, 733], [1130, 729], [1143, 723], [1155, 715], [1163, 716], [1177, 721], [1188, 723], [1197, 714], [1207, 698], [1217, 688], [1233, 682], [1242, 681], [1253, 675], [1269, 668]];
let m = dots(24, 1286, 665) + dots(24, 1286, 679) + dots(24, 1286, 733);
m += rect(1287, 665, 1, 108, LINE) + rect(22, 772, 1266, 1, LINE);
bars.forEach(({ x }) => {
  const h = Math.round(2 * (at(dea, x) - at(diff, x)));
  m += h > 0 ? rect(x, 733 - h, 1, h, RED) : rect(x, 734, 1, -h, GREEN);
});
m += poly(diff, '#fff') + poly(dea, '#ff0');
[[30, 726], [184, 717], [216, 708], [289, 723], [315, 725], [421, 737], [486, 727], [519, 722], [646, 691], [688, 691], [796, 717], [817, 718], [850, 721], [892, 705], [1036, 698], [1161, 710], [1236, 680], [1267, 672]].forEach(([x, y]) => {
  m += `<path d="M${x - 2} ${y - 7}h5v7h3l-5 7-5-7h2z" fill="${GREEN}"/>`;
});
[[105, 765], [192, 729], [261, 740], [304, 737], [394, 751], [435, 749], [490, 740], [544, 738], [669, 710], [754, 741], [811, 730], [837, 732], [856, 732], [961, 752], [1096, 741], [1188, 723], [1242, 685]].forEach(([x, y]) => {
  m += `<path d="M${x - 2} ${y + 7}h5v-7h3l-5-7-5 7h2z" fill="${RED}"/>`;
});
[[22, '01'], [84, '02'], [129, '03'], [192, '04'], [252, '05'], [312, '06'], [369, '07'], [438, '08'], [504, '09'], [561, '10'], [615, '11'], [678, '12'], [744, '01'], [798, '02'], [852, '03'], [915, '04'], [978, '05'], [1036, '06'], [1095, '07'], [1164, '08'], [1227, '09']].forEach(([x, s]) => {
  m += rect(x, 773, 1, 3, LINE) + text(x + 1, 786, s, RED);
});
m += text(1289, 670, '+1.34', RED) + text(1289, 684, '+1.07', RED) + text(1289, 738, '+0', RED);
put('macd', m);

/* Intraday */
let d = '';
[[555, '24.77', '6.86%'], [577, '24.39', '5.23%'], [600, '24.00', '3.52%'], [623, '23.60', '1.82%'], [647, '23.18', '0.00%'], [670, '22.79', '1.67%'], [693, '22.40', '3.37%'], [716, '22.00', '5.08%'], [741, '21.59', '6.86%'], [766, '6617', ''], [791, '3308', '']].forEach(([y, left, right], i) => {
  const c = i < 4 ? RED : i === 4 ? '#fff' : i < 9 ? GREEN : '#00b8ff';
  const thick = i === 4 || i === 8;
  d += rect(1384, thick ? y - 1 : y, 170, thick ? 3 : 1, LINE);
  d += text(1382, y + 5, left, c, 'text-anchor="end"') + text(1556, y + 5, right, c);
});
[1384, 1427, 1512, 1553].forEach(x => { d += rect(x, 555, 1, 262, LINE); });
d += rect(1469, 555, 2, 262, LINE);
[1406, 1448, 1490, 1532].forEach(x => { d += `<path d="M${x + 0.5} 558V816" stroke="${LINE}" stroke-dasharray="1 3"/>`; });
const volDay = [[1385, 9], [1388, 6], [1393, 3], [1412, 4], [1415, 18], [1417, 42], [1418, 20], [1420, 75], [1422, 22], [1425, 57], [1426, 20], [1428, 50], [1429, 18], [1431, 41], [1433, 20], [1436, 16], [1440, 8], [1450, 6], [1460, 10], [1461, 13], [1464, 4], [1476, 5], [1478, 23], [1480, 5], [1500, 5], [1510, 8], [1528, 6], [1530, 20], [1532, 6], [1551, 8], [1553, 20]];
for (let x = 1385; x < 1554; x++) {
  const base = at(volDay, x);
  const h = x === 1420 ? 74 : Math.min(58, Math.round(base * (0.5 + 0.7 * noise(x))));
  d += rect(x, 816 - h, 1, h, ['#ffff80', '#54fcfc', '#ffff80'][Math.floor(noise(x + 7) * 3)]);
}
const price = [[1385, 647], [1389, 635], [1393, 643], [1396, 652], [1402, 647], [1408, 647], [1413, 644], [1416, 630], [1420, 590], [1422, 600], [1426, 563], [1428, 573], [1431, 556], [1434, 570], [1436, 563], [1440, 578], [1445, 587], [1453, 583], [1461, 591], [1466, 583], [1475, 587], [1480, 575], [1485, 585], [1491, 595], [1500, 607], [1505, 595], [1511, 593], [1515, 581], [1520, 587], [1530, 580], [1536, 584], [1546, 586], [1553, 585]];
const avg = [[1385, 647], [1391, 641], [1398, 645], [1415, 644], [1421, 627], [1428, 608], [1435, 599], [1441, 596], [1470, 594], [1493, 593], [1513, 594], [1536, 592], [1553, 592]];
const walk = [];
for (let x = 1385; x < 1554; x++) walk.push([x, at(price, x) + (noise(x) - 0.5) * (x < 1540 ? 7 : 2)]);
d += poly(avg, '#ffff80') + poly(walk, '#fff');
put('intraday', d);
```
